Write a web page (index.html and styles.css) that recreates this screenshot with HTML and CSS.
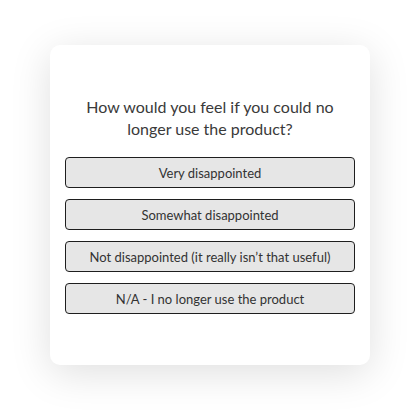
FILE: index.html
```html
<!DOCTYPE html>
<html>
<head>
<meta charset="utf-8">
<link rel="stylesheet" href="styles.css">
</head>
<body>
<div class="stage">
  <div class="card">
    <p class="question">How would you feel if you could no longer use the product?</p>
    <div class="options">
      <button class="option">Very disappointed</button>
      <button class="option">Somewhat disappointed</button>
      <button class="option">Not disappointed (it really isn’t that useful)</button>
      <button class="option">N/A - I no longer use the product</button>
    </div>
  </div>
</div>
</body>
</html>
```
FILE: styles.css
```css
html, body {
  margin: 0;
  padding: 0;
  background: #ffffff;
}
.stage {
  width: 420px;
  height: 410px;
  display: flex;
  align-items: center;
  justify-content: center;
}
.card {
  box-sizing: border-box;
  width: 320px;
  height: 320px;
  background: #ffffff;
  border-radius: 10px;
  box-shadow: 0 8px 40px rgba(0, 0, 0, 0.13);
  padding: 51px 15px 0;
  font-family: Lato, "Noto Sans", sans-serif;
}
.question {
  margin: 0 0 17px;
  text-align: center;
  font-size: 16px;
  line-height: 22px;
  color: #3a3a3a;
  padding: 0 20px;
}
.options {
  display: flex;
  flex-direction: column;
  gap: 11px;
}
.option {
  box-sizing: border-box;
  height: 31px;
  width: 100%;
  background: #e6e6e6;
  border: 1px solid #1e1e1e;
  border-radius: 4px;
  font-family: Lato, "Noto Sans", sans-serif;
  font-size: 13px;
  color: #333333;
  padding: 0;
  text-align: center;
}
```
